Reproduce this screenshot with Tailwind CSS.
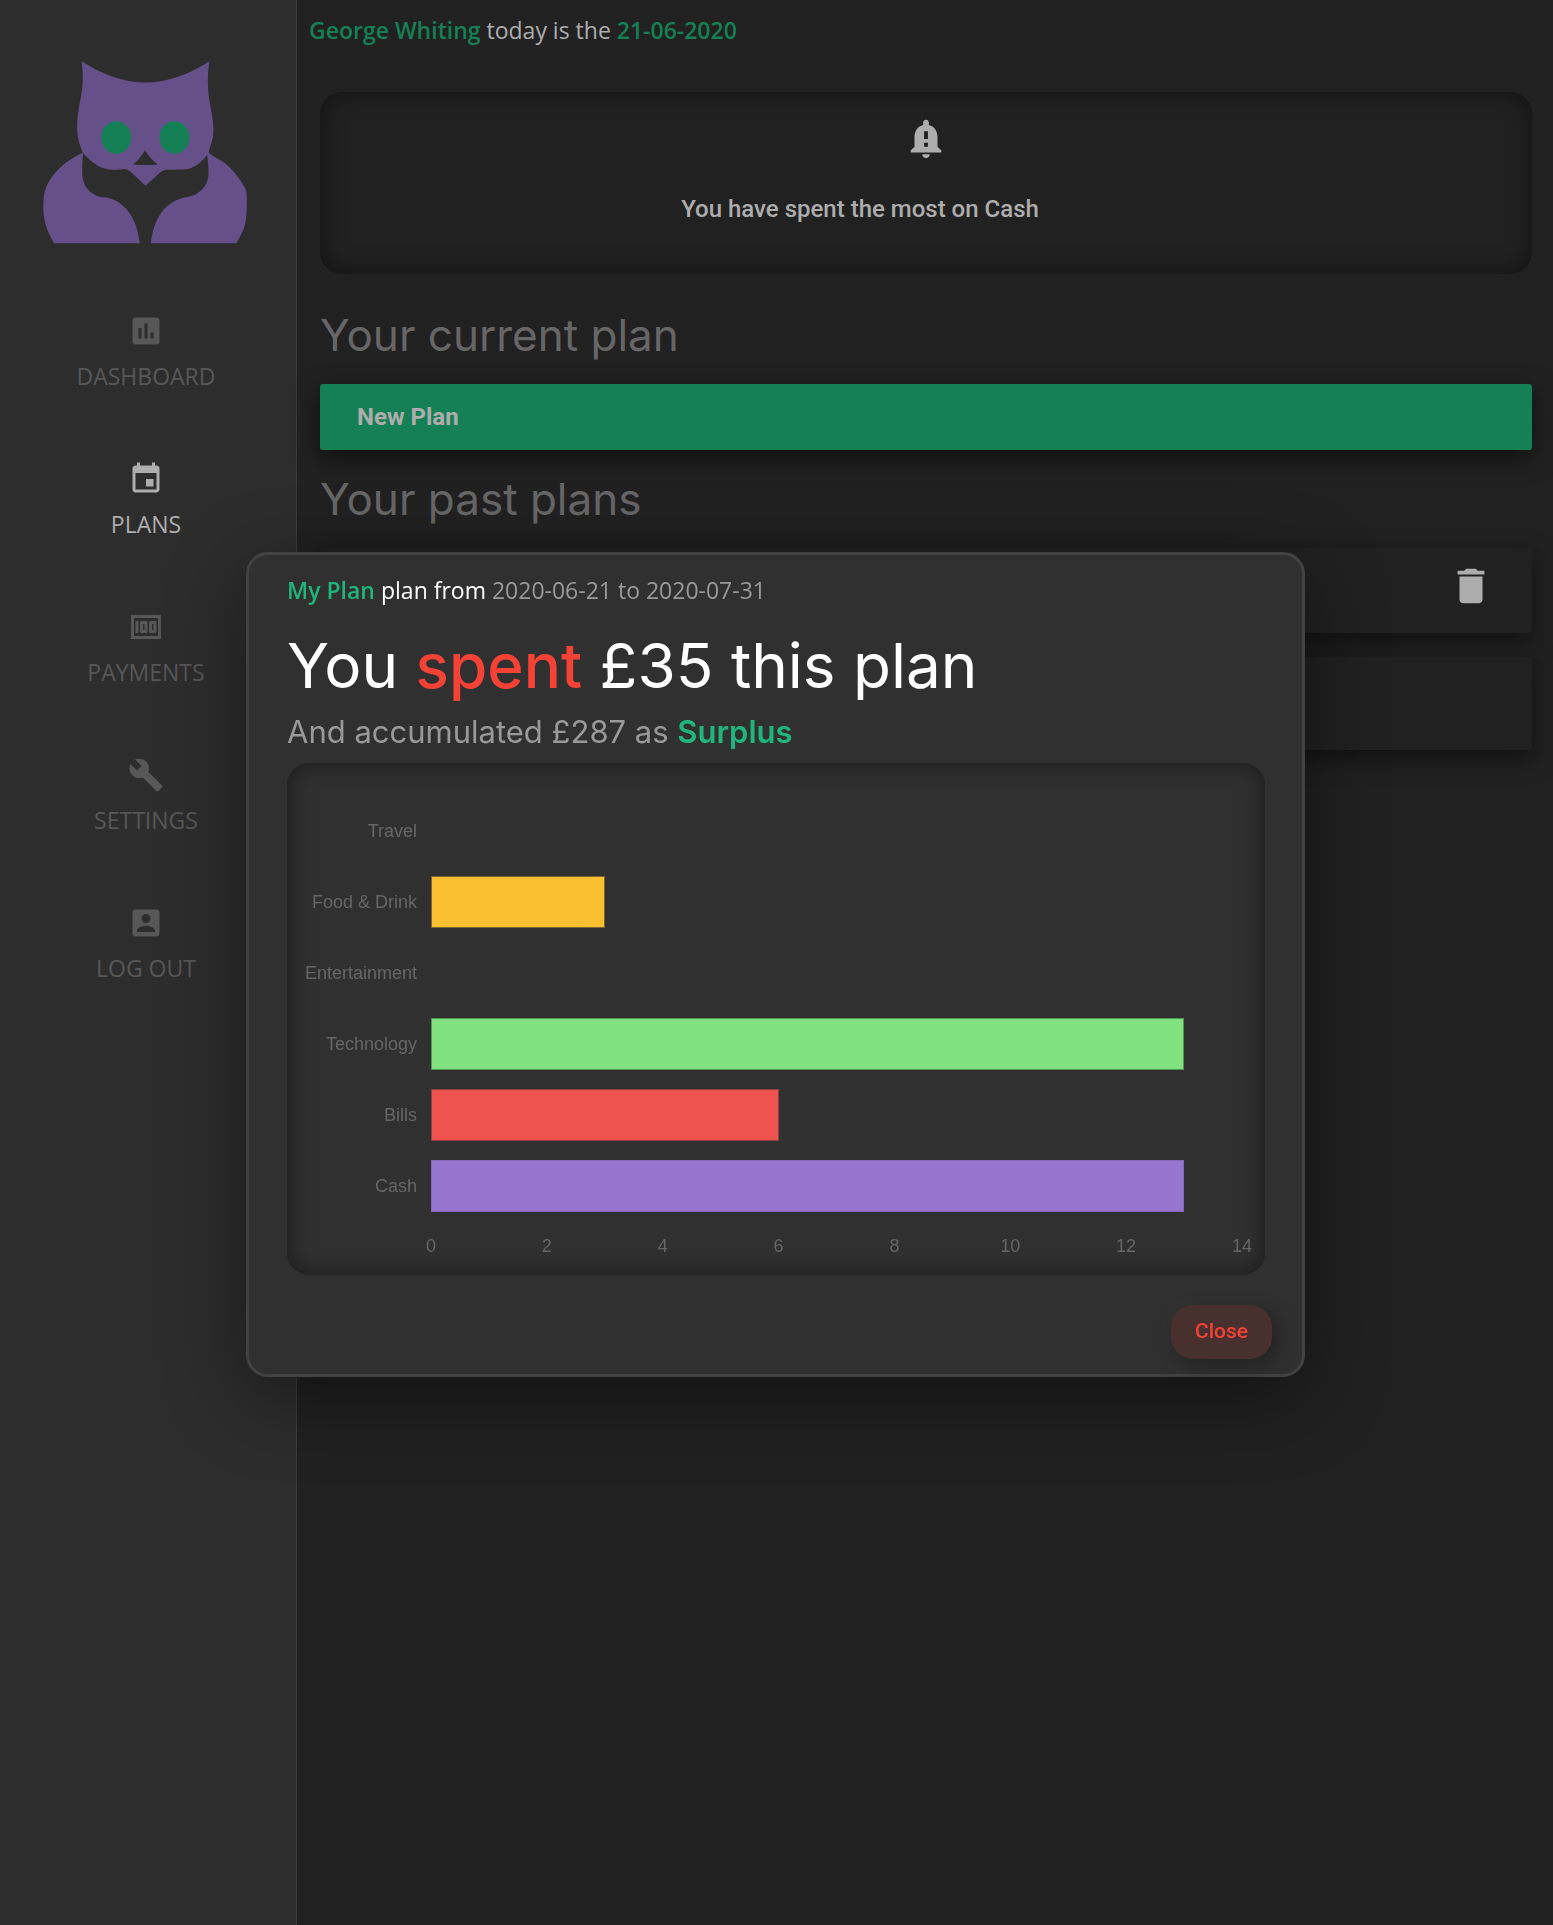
<!DOCTYPE html>
<html lang="en">
<head>
<meta charset="utf-8">
<meta name="viewport" content="width=device-width, initial-scale=1">
<title>Plans</title>
<script src="https://cdn.jsdelivr.net/npm/@tailwindcss/browser@4"></script>
</head>
<body class="flex min-h-screen bg-[#212121] font-['Open_Sans',sans-serif] text-[#adadad]">

<aside class="flex w-[297px] shrink-0 flex-col items-center border-r border-[#3c3c3c] bg-[#2d2d2d] pt-[61px] pr-1">
  <svg class="mr-0.5 h-[183px] w-[204px]" viewBox="129 183 613 548" role="img" aria-label="Owl logo">
    <g fill="#65508a">
      <path fill-rule="evenodd" d="M245 183C300 219 370 247 436 247C505 247 572 220 629 183C624 215 622 258 629 300C636 340 642 365 641 395C640 425 631 435 627 458C605 490 580 507 552 508L500 509C486 509 476 523 437 557C404 526 390 510 378 507C370 505 365 509 342 509C300 509 280 490 248 458C242 435 232 420 232 390C231 350 237 318 243 290C250 258 250 220 245 183ZM436 450C424 470 412 484 399 493Q436 496 474 493Q450 475 436 450Z"/>
      <path d="M250 457C190 485 142 530 132 585C126 640 132 680 163 730H420C412 665 385 608 322 592C290 592 252 575 247 525C246 500 248 480 249 461Z"/>
      <path d="M626 457C640 469 650 472 665 482C700 505 728 545 740 573C743 600 742 635 738 665C733 690 722 708 710 730H453C462 660 490 602 565 590C595 585 625 560 626 525C627 500 624 480 622 461Z"/>
    </g>
    <ellipse cx="349" cy="412" rx="45" ry="49" fill="#157f55"/>
    <ellipse cx="524" cy="412" rx="45" ry="49" fill="#157f55"/>
  </svg>

  <nav class="mt-[69px] flex flex-col gap-[69px] text-center text-[23px] leading-8 text-[#575757]" aria-label="Main">
    <a href="#" class="flex flex-col items-center gap-[11px]">
      <svg class="size-9" viewBox="0 0 24 24" fill="currentColor"><path d="M19 3H5c-1.100 0-2 .9-2 2v14c0 1.100.9 2 2 2h14c1.100 0 2-.9 2-2V5c0-1.100-.9-2-2-2zM9 17H7v-7h2v7zm4 0h-2V7h2v10zm4 0h-2v-4h2v4z"/></svg>
      DASHBOARD
    </a>
    <a href="#" aria-current="page" class="flex flex-col items-center gap-[11px] text-[#adadad]">
      <svg class="size-9" viewBox="0 0 24 24" fill="currentColor"><path d="M17 12h-5v5h5v-5zM16 1v2H8V1H6v2H5c-1.110 0-1.990.9-1.990 2L3 19c0 1.100.89 2 2 2h14c1.100 0 2-.9 2-2V5c0-1.100-.9-2-2-2h-1V1h-2zm3 18H5V8h14v11z"/></svg>
      PLANS
    </a>
    <a href="#" class="flex flex-col items-center gap-[11px]">
      <svg class="size-9" viewBox="0 0 24 24" fill="currentColor"><path d="M5 8h2v8H5V8zm7 0H9c-.55 0-1 .45-1 1v6c0 .55.45 1 1 1h3c.55 0 1-.45 1-1V9c0-.55-.45-1-1-1zm-1 6h-1v-4h1v4zm7-6h-3c-.55 0-1 .45-1 1v6c0 .55.45 1 1 1h3c.55 0 1-.45 1-1V9c0-.55-.45-1-1-1zm-1 6h-1v-4h1v4z"/><path d="M2 4v16h20V4H2zm2 14V6h16v12H4z"/></svg>
      PAYMENTS
    </a>
    <a href="#" class="flex flex-col items-center gap-[11px]">
      <svg class="size-9" viewBox="0 0 24 24" fill="currentColor"><path d="M22.700 19l-9.100-9.100c.9-2.300.4-5-1.500-6.900-2-2-5-2.400-7.400-1.300L9 6 6 9 1.600 4.700C.4 7.100.9 10.100 2.900 12.100c1.900 1.900 4.600 2.400 6.900 1.500l9.100 9.100c.4.4 1 .4 1.400 0l2.300-2.300c.5-.4.5-1.100.1-1.400z"/></svg>
      SETTINGS
    </a>
    <a href="#" class="flex flex-col items-center gap-[11px]">
      <svg class="size-9" viewBox="0 0 24 24" fill="currentColor"><path d="M3 5v14c0 1.100.89 2 2 2h14c1.100 0 2-.9 2-2V5c0-1.100-.9-2-2-2H5c-1.110 0-2 .9-2 2zm12 4c0 1.660-1.340 3-3 3s-3-1.340-3-3 1.340-3 3-3 3 1.340 3 3zm-9 8c0-2 4-3.100 6-3.100s6 1.100 6 3.100v1H6v-1z"/></svg>
      LOG OUT
    </a>
  </nav>
</aside>

<main class="min-w-0 flex-1 pr-[21px] pl-[23px]">
  <p class="-ml-[11px] pt-[14px] text-[23px] leading-8"><span class="font-semibold text-[#157f55]">George Whiting</span> today is the <span class="font-semibold text-[#157f55]">21-06-2020</span></p>

  <section class="mt-[46px] flex h-[182px] flex-col items-center rounded-[22px] pt-6 font-[Roboto,sans-serif] text-2xl font-medium shadow-[inset_0_0_24px_rgba(0,0,0,0.5)]">
    <svg class="size-[46px]" viewBox="0 0 24 24" fill="currentColor"><path d="M12 22c1.100 0 2-.9 2-2h-4c0 1.100.9 2 2 2z"/><path fill-rule="evenodd" d="M18 16v-5c0-3.070-1.630-5.640-4.500-6.320V3.500c0-.83-.67-1.500-1.500-1.500s-1.500.67-1.500 1.500v1.180C7.640 5.360 6 7.930 6 11v5l-2 2v1h16v-1l-2-2zm-5 0h-2v-2h2v2zm0-4h-2V8h2v4z"/></svg>
    <p class="mt-[31px] w-full pr-[132px] text-center leading-8">You have spent the most on Cash</p>
  </section>

  <h2 class="mt-9 font-[Inter,sans-serif] text-[44px] leading-[50px] font-normal text-[#666]">Your current plan</h2>
  <button type="button" class="mt-6 flex h-[66px] w-full items-center rounded-[3px] bg-[#157f55] px-[37px] font-[Roboto,sans-serif] text-2xl font-bold shadow-[0_8px_24px_rgba(0,0,0,0.55)]">New Plan</button>

  <h2 class="mt-6 font-[Inter,sans-serif] text-[44px] leading-[50px] font-normal text-[#666]">Your past plans</h2>
  <ul class="mt-6 flex flex-col gap-6">
    <li class="flex h-[85px] justify-end rounded-[3px] bg-[#212121] pt-[15px] pr-[38px] shadow-[0_8px_24px_rgba(0,0,0,0.5)]">
      <button type="button" aria-label="Delete plan" class="size-[46px]">
        <svg class="size-full" viewBox="0 0 24 24" fill="currentColor"><path d="M6 19c0 1.100.9 2 2 2h8c1.100 0 2-.9 2-2V7H6v12zM19 4h-3.500l-1-1h-5l-1 1H5v2h14V4z"/></svg>
      </button>
    </li>
    <li class="h-[93px] rounded-[3px] bg-[#212121] shadow-[0_8px_24px_rgba(0,0,0,0.5)]"></li>
  </ul>
</main>

<div class="fixed inset-0 flex items-center justify-center pt-1 pr-0.5">
  <div role="dialog" aria-modal="true" aria-labelledby="plan-title" class="w-full max-w-[1059px] rounded-[22px] border-3 border-[#424242] bg-[#303030] pt-[19px] pr-[37px] pb-[15px] pl-[38px] shadow-[0_20px_80px_rgba(0,0,0,0.45)]">
    <p class="text-[23px] leading-8 text-[#999]"><span class="font-semibold text-[#20b57c]">My Plan</span> <span class="font-medium text-white">plan from</span> 2020-06-21 to 2020-07-31</p>
    <h1 id="plan-title" class="mt-6 font-[Inter,sans-serif] text-[62px] leading-[72px] font-normal text-white">You <span class="font-medium text-[#f44336]">spent</span> £35 this plan</h1>
    <p class="mt-3 font-[Inter,sans-serif] text-[31px] leading-9 font-normal text-[#999]">And accumulated £287 as <span class="font-semibold text-[#20b57c]">Surplus</span></p>

    <figure class="mt-[13px] rounded-[22px] pt-8 pr-[23px] pb-[17px] font-['Liberation_Sans',sans-serif] text-lg leading-6 text-[#666] shadow-[inset_0_0_24px_rgba(0,0,0,0.45)]" aria-label="Spending by category">
      <div class="grid auto-rows-[71px] grid-cols-[130px_1fr] items-center gap-x-[14px] text-right">
        <span>Travel</span><div></div>
        <span>Food &amp; Drink</span><div><div class="h-[52px] border border-[#7d6531] bg-[#fbc02f]" style="width:21.430%"></div></div>
        <span>Entertainment</span><div></div>
        <span>Technology</span><div><div class="h-[52px] border border-[#559458] bg-[#81e17f]" style="width:92.860%"></div></div>
        <span>Bills</span><div><div class="h-[52px] border border-[#93403f] bg-[#ef5350]" style="width:42.860%"></div></div>
        <span>Cash</span><div><div class="h-[52px] border border-[#8566b8] bg-[#9575cd]" style="width:92.860%"></div></div>
      </div>
      <div class="mt-[13px] ml-[144px] flex justify-between">
        <span class="flex w-0 justify-center">0</span>
        <span class="flex w-0 justify-center">2</span>
        <span class="flex w-0 justify-center">4</span>
        <span class="flex w-0 justify-center">6</span>
        <span class="flex w-0 justify-center">8</span>
        <span class="flex w-0 justify-center">10</span>
        <span class="flex w-0 justify-center">12</span>
        <span class="flex w-0 justify-center">14</span>
      </div>
    </figure>

    <div class="-mr-[7px] mt-[30px] flex justify-end">
      <button type="button" class="h-[54px] rounded-[22px] bg-[#48302e] px-6 font-[Roboto,sans-serif] text-[21px] font-medium text-[#f44336] shadow-[6px_6px_20px_rgba(0,0,0,0.3),-6px_-6px_20px_rgba(255,255,255,0.02)]">Close</button>
    </div>
  </div>
</div>
</body>
</html>
